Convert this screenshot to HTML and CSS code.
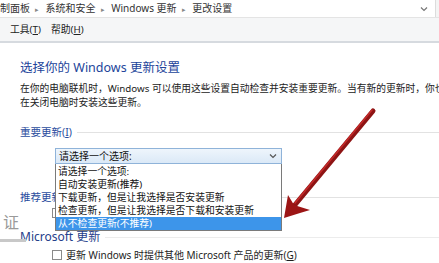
FILE: index.html
```html
<!DOCTYPE html>
<html lang="zh-CN">

<head>
  <meta charset="UTF-8">
  <title>更改设置</title>
  <link rel="stylesheet" href="styles.css">
</head>

<body>
  <div class="window">
    <div class="addressbar">
      <div class="crumbs">
        <span>制面板</span><span class="sep">▸</span>
        <span>系统和安全</span><span class="sep">▸</span>
        <span>Windows 更新</span><span class="sep">▸</span>
        <span>更改设置</span>
      </div>
      <svg class="chevron" width="8" height="6" viewBox="0 0 8 6">
        <path d="M1 1.5 L4 4.5 L7 1.5" fill="none" stroke="#777" stroke-width="1.2" />
      </svg>
      <div class="refresh"></div>
    </div>

    <div class="menubar">
      <span>工具(<u>T</u>)</span>
      <span>帮助(<u>H</u>)</span>
    </div>

    <div class="content">
      <h1>选择你的 Windows 更新设置</h1>
      <p class="intro">在你的电脑联机时，Windows 可以使用这些设置自动检查并安装重要更新。当有新的更新时，你也<br>在关闭电脑时安装这些更新。</p>

      <div class="group-title">
        <span>重要更新(<u>I</u>)</span>
        <div class="rule"></div>
      </div>

      <div class="combo-wrap">
        <div class="combo">
          <span>请选择一个选项:</span>
          <svg width="8" height="6" viewBox="0 0 8 6">
            <path d="M1 1.5 L4 4.5 L7 1.5" fill="none" stroke="#555" stroke-width="1.2" />
          </svg>
        </div>
        <ul class="dropdown">
          <li>请选择一个选项:</li>
          <li>自动安装更新(推荐)</li>
          <li>下载更新，但是让我选择是否安装更新</li>
          <li>检查更新，但是让我选择是否下载和安装更新</li>
          <li class="selected">从不检查更新(不推荐)</li>
        </ul>
      </div>

      <div class="group-title recommend">
        <span>推荐更新(<u>R</u>)</span>
        <div class="rule"></div>
      </div>
      <div class="check-row">
        <span class="box"></span>
      </div>

      <div class="group-title microsoft">
        <span>Microsoft 更新</span>
        <div class="rule"></div>
      </div>
      <div class="check-row last">
        <span class="box"></span>
        <span>更新 Windows 时提供其他 Microsoft 产品的更新(<u>G</u>)</span>
      </div>
    </div>

    <div class="watermark">
      <span class="mark">证</span>
      <span class="smudge"></span>
    </div>

    <svg class="arrow" width="439" height="263" viewBox="0 0 439 263">
      <line x1="373" y1="111" x2="294" y2="206" stroke="#8e1414" stroke-width="5" stroke-linecap="round" />
      <line x1="372" y1="110" x2="295" y2="203" stroke="#c42a2a" stroke-width="1.5" stroke-linecap="round" />
      <path d="M284 218 L288 195 L294 205 L310 210 L300 213 Z" fill="#9c1515" />
    </svg>
  </div>
</body>

</html>
```

FILE: styles.css
```css
body {
  margin: 0;
  padding: 0;
  font-family: "Noto Sans", "Noto Sans CJK SC", sans-serif;
  color: #1e1e1e;
  background-color: #fff;
}

.window {
  position: relative;
  width: 439px;
  height: 263px;
  overflow: hidden;
}

.addressbar {
  display: flex;
  align-items: center;
  height: 17px;
  border-bottom: 1px solid #e4e4e4;
  background-color: #fff;
}

.crumbs {
  flex: 1;
  font-size: 10px;
  line-height: 17px;
  color: #333;
  white-space: nowrap;
}

.crumbs .sep {
  color: #888;
  font-size: 7px;
  margin: 0 4px 0 5px;
}

.chevron {
  margin-right: 7px;
}

.refresh {
  width: 3px;
  height: 17px;
  border-left: 1px solid #dcdcdc;
  background-color: #f4f4f4;
}

.menubar {
  display: flex;
  gap: 10px;
  height: 22px;
  padding: 1px 0 0 10px;
  background-color: #f5f6f7;
  border-bottom: 2px solid #d6dadf;
  font-size: 9.8px;
  line-height: 22px;
  color: #222;
}

.content {
  padding-left: 20px;
}

.content h1 {
  margin: 16px 0 0;
  font-size: 12.5px;
  line-height: 18px;
  font-weight: normal;
  color: #22449a;
  white-space: nowrap;
}

.intro {
  margin: 5px 0 0;
  font-size: 9.75px;
  line-height: 14px;
  color: #222;
  white-space: nowrap;
}

.group-title {
  display: flex;
  align-items: center;
  gap: 5px;
  margin-top: 15px;
  font-size: 10.5px;
  line-height: 14px;
  color: #2a4d9e;
  white-space: nowrap;
}

.group-title .rule {
  flex: 1;
  height: 1px;
  background-color: #e2e2e2;
}

.group-title.recommend {
  margin-top: 26px;
}

.group-title.microsoft {
  margin-top: 10px;
  font-size: 12px;
  color: #25408a;
}

.group-title.microsoft .rule {
  background-color: #ececec;
}

.combo-wrap {
  position: relative;
  margin: 9px 0 0 35px;
  width: 227px;
}

.combo {
  display: flex;
  align-items: center;
  justify-content: space-between;
  height: 14px;
  padding: 0 4px 0 3px;
  border: 1px solid #8fb3d9;
  background: linear-gradient(#eef5fc, #dbe9f7);
  font-size: 10px;
  line-height: 14px;
  color: #111;
}

.dropdown {
  position: absolute;
  top: 16px;
  left: 0;
  width: 225px;
  margin: 0;
  padding: 1px 0 0;
  list-style: none;
  background-color: #fff;
  border: 1px solid #7a7a7a;
  border-top: none;
  font-size: 9.8px;
  z-index: 5;
}

.dropdown li {
  height: 13px;
  line-height: 13px;
  padding-left: 2px;
  white-space: nowrap;
  color: #111;
}

.dropdown li.selected {
  background-color: #3d95ea;
  color: #fff;
}

.check-row {
  display: flex;
  align-items: center;
  gap: 4px;
  margin: 2px 0 0 32px;
  height: 14px;
  font-size: 10px;
  line-height: 14px;
  white-space: nowrap;
}

.check-row.last {
  margin-top: 4px;
}

.check-row .box {
  width: 8px;
  height: 8px;
  border: 1px solid #8a8a8a;
  background-color: #fff;
}

.watermark {
  position: absolute;
  left: 0;
  top: 212px;
  width: 26px;
  color: #9a9a9a;
}

.watermark .mark {
  display: block;
  font-family: "Noto Sans CJK SC", sans-serif;
  font-size: 16px;
  line-height: 18px;
  padding-left: 3px;
}

.watermark .smudge {
  display: block;
  margin-top: 9px;
  width: 26px;
  height: 3px;
  background-color: #c8c8c8;
}

.arrow {
  position: absolute;
  left: 0;
  top: 0;
  z-index: 10;
}
```
